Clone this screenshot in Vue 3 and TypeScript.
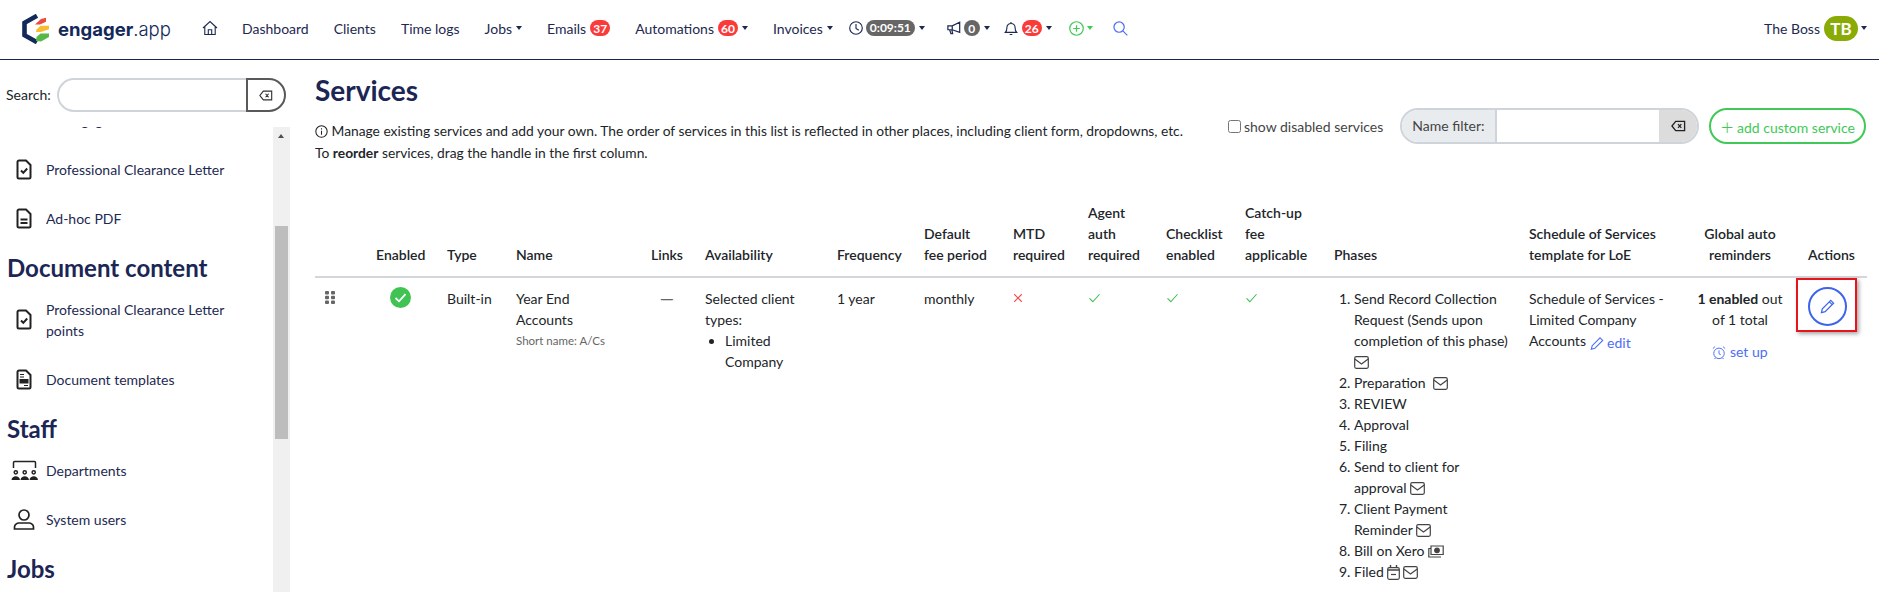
<script setup lang="ts">
const links: { label: string; badge?: string; caret?: boolean }[] = [
  { label: 'Dashboard' },
  { label: 'Clients' },
  { label: 'Time logs' },
  { label: 'Jobs', caret: true },
  { label: 'Emails', badge: '37' },
  { label: 'Automations', badge: '60', caret: true },
  { label: 'Invoices', caret: true },
]
const colWidths: number[] = [53, 71, 69, 135, 54, 132, 87, 89, 75, 78, 79, 89, 195, 159, 120, 67]
</script>

<template>
  <div class="page">
    <header class="nav">
      <div class="logo">
        <svg class="logo-mark" viewBox="0 0 28 30" width="28" height="30">
          <path d="M15 1.800 2.500 8.800V21.200L15 28.200" fill="none" stroke="#12295a" stroke-width="4.600" />
          <path d="M13 10.500 19 5 24 3.800V7.800L18 10.500Z" fill="#ec4a3f" />
          <path d="M14 18 14.500 15.500 18.500 11.800H27V15.200L19 18Z" fill="#f6bd32" />
          <path d="M14 27 14.500 23 18.500 19.500H27V23L19 27.500Z" fill="#58b847" />
        </svg>
        <span class="logo-text"><b>engager</b>.app</span>
      </div>
      <svg class="home" viewBox="0 0 16 16" width="16" height="16" fill="none" stroke="#1d2951" stroke-width="1.100">
        <path d="M1 8 8 1.500 15 8M2.800 6.500V14.500H13.200V6.500M6.300 14.500V9.800H9.700V14.500" />
      </svg>
      <nav class="links">
        <a v-for="l in links" :key="l.label" class="link">
          <span>{{ l.label }}</span>
          <span v-if="l.badge" class="badge">{{ l.badge }}</span>
          <i v-if="l.caret" class="caret"></i>
        </a>
      </nav>
      <div class="util clock">
        <svg viewBox="0 0 16 16" width="14" height="14" fill="none" stroke="#1d2951" stroke-width="1.300"><circle cx="8" cy="8" r="7.200" /><path d="M8 3.500V8.500L11.200 10.500" /></svg>
        <span class="pill">0:09:51</span>
        <i class="caret"></i>
      </div>
      <div class="util mega">
        <svg viewBox="0 0 16 16" width="14" height="16" fill="none" stroke="#1d2951" stroke-width="1.400"><path d="M1 5.500H6L14.500 1.500V13L6 10H1ZM6 5.500V10M3 10 4.500 14.500H6.500L5.500 10" /></svg>
        <span class="badge grey">0</span>
        <i class="caret"></i>
      </div>
      <div class="util bell">
        <svg viewBox="0 0 16 16" width="14" height="17" fill="none" stroke="#1d2951" stroke-width="1.300"><path d="M1.500 12.500C3 11 3.300 9.500 3.300 7C3.300 4 5.300 2.300 8 2.300S12.700 4 12.700 7C12.700 9.500 13 11 14.500 12.500ZM8 .5V2.300M6.500 14.800H9.500" /></svg>
        <span class="badge">26</span>
        <i class="caret"></i>
      </div>
      <div class="util plus">
        <svg viewBox="0 0 16 16" width="15" height="15" fill="none" stroke="#41c957" stroke-width="1.300"><circle cx="8" cy="8" r="7.200" /><path d="M8 4.500V11.500M4.500 8H11.500" /></svg>
        <i class="caret green"></i>
      </div>
      <svg class="search" viewBox="0 0 16 16" width="15" height="15" fill="none" stroke="#4d6ef5" stroke-width="1.300"><circle cx="6.500" cy="6.500" r="5.500" /><path d="M10.500 10.500 15.300 15.300" /></svg>
      <div class="user">
        <span>The Boss</span>
        <span class="avatar">TB</span>
        <i class="caret"></i>
      </div>
    </header>

    <div class="body">
      <aside class="side">
        <div class="side-search">
          <label>Search:</label>
          <div class="side-field">
            <input class="side-input" type="text" />
            <button class="side-clear">
              <svg viewBox="0 0 16 12" width="14" height="11" fill="none" stroke="#333" stroke-width="1.300"><path d="M5 1H14.500V11H5L1 6ZM7.500 4 11 8M11 4 7.500 8" /></svg>
            </button>
          </div>
        </div>
        <div class="side-scroll">
          <div class="side-list">
            <div class="side-inner">
              <div class="side-item"><span class="side-icon"></span><span>Disengagement Letter</span></div>
              <div class="side-item">
                <svg class="side-icon" viewBox="0 0 16 21" fill="none" stroke="#222" stroke-width="2"><path d="M1.500 3A1.500 1.500 0 0 1 3 1.500H10L14.500 6V18A1.500 1.500 0 0 1 13 19.500H3A1.500 1.500 0 0 1 1.500 18Z" /><path d="M5 11.500 7.300 13.800 11.200 9.500" /></svg>
                <span>Professional Clearance Letter</span>
              </div>
              <div class="side-item">
                <svg class="side-icon" viewBox="0 0 16 21" fill="none" stroke="#222" stroke-width="2"><path d="M1.500 3A1.500 1.500 0 0 1 3 1.500H10L14.500 6V18A1.500 1.500 0 0 1 13 19.500H3A1.500 1.500 0 0 1 1.500 18Z" /><path d="M4.500 11.500H11.500M4.500 15H11.500" /></svg>
                <span>Ad-hoc PDF</span>
              </div>
              <h2 class="side-head">Document content</h2>
              <div class="side-item">
                <svg class="side-icon" viewBox="0 0 16 21" fill="none" stroke="#222" stroke-width="2"><path d="M1.500 3A1.500 1.500 0 0 1 3 1.500H10L14.500 6V18A1.500 1.500 0 0 1 13 19.500H3A1.500 1.500 0 0 1 1.500 18Z" /><path d="M5 11.500 7.300 13.800 11.200 9.500" /></svg>
                <span class="side-wrap">Professional Clearance Letter points</span>
              </div>
              <div class="side-item">
                <svg class="side-icon" viewBox="0 0 16 21" fill="none" stroke="#222" stroke-width="2"><path d="M1.500 3A1.500 1.500 0 0 1 3 1.500H10L14.500 6V18A1.500 1.500 0 0 1 13 19.500H3A1.500 1.500 0 0 1 1.500 18Z" /><path d="M4 5.500H8M4 8H8" stroke-width="1" /><rect x="3.500" y="10" width="9" height="4.500" fill="#222" stroke="none" /><path d="M8 16.500H12" stroke-width="1" /></svg>
                <span>Document templates</span>
              </div>
              <h2 class="side-head">Staff</h2>
              <div class="side-item">
                <svg class="dept-icon" viewBox="0 0 27 20" width="27" height="20" fill="none" stroke="#222" stroke-width="1.500"><path d="M2.500 8V2.500A1 1 0 0 1 3.500 1.500H23.500A1 1 0 0 1 24.500 2.500V8" /><g fill="#222" stroke="none"><path d="M.5 20.500C.5 14.800 9 14.800 9 20.500ZM9.500 20.500C9.500 14.800 18 14.800 18 20.500ZM18.500 20.500C18.500 14.800 27 14.800 27 20.500Z" /></g><circle cx="4.800" cy="12.300" r="1.600" /><circle cx="13.700" cy="12.300" r="1.600" /><circle cx="22.700" cy="12.300" r="1.600" /></svg>
                <span>Departments</span>
              </div>
              <div class="side-item">
                <svg class="user-icon" viewBox="0 0 22 21" width="22" height="21" fill="none" stroke="#222" stroke-width="1.700"><circle cx="11" cy="6" r="5" /><path d="M1.500 20V18C1.500 15.500 4 14 6 14H16C18 14 20.500 15.500 20.500 18V20Z" /></svg>
                <span>System users</span>
              </div>
              <h2 class="side-head">Jobs</h2>
            </div>
          </div>
          <div class="scrollbar">
            <i class="arrow"></i>
            <div class="thumb"></div>
          </div>
        </div>
      </aside>

      <main class="main">
        <h1 class="title">Services</h1>
        <div class="toolbar">
          <p class="info">
            <svg class="info-icon" viewBox="0 0 16 16" width="13" height="13" fill="none" stroke="#222" stroke-width="1.300"><circle cx="8" cy="8" r="7" /><path d="M8 7V12M8 4V5.400" /></svg>
            Manage existing services and add your own. The order of services in this list is reflected in other places, including client form, dropdowns, etc.<br />
            To <b>reorder</b> services, drag the handle in the first column.
          </p>
          <label class="disabled-check"><input type="checkbox" class="check" /><span>show disabled services</span></label>
          <div class="filter">
            <span class="filter-label">Name filter:</span>
            <input class="filter-input" type="text" />
            <button class="filter-clear">
              <svg viewBox="0 0 16 12" width="15" height="12" fill="none" stroke="#222" stroke-width="1.400"><path d="M5 1H14.500V11H5L1 6ZM7.500 4 11 8M11 4 7.500 8" /></svg>
            </button>
          </div>
          <button class="add"><span class="add-plus">+</span> add custom service</button>
        </div>

        <table class="table">
          <colgroup><col v-for="(w, i) in colWidths" :key="i" :style="{ width: w + 'px' }" /></colgroup>
          <thead>
            <tr>
              <th></th><th>Enabled</th><th>Type</th><th>Name</th><th class="links-col">Links</th><th>Availability</th><th>Frequency</th>
              <th>Default<br />fee period</th><th>MTD<br />required</th><th>Agent<br />auth<br />required</th><th>Checklist<br />enabled</th><th>Catch-up<br />fee<br />applicable</th>
              <th>Phases</th><th>Schedule of Services<br />template for LoE</th><th class="center">Global auto<br />reminders</th><th>Actions</th>
            </tr>
          </thead>
          <tbody>
            <tr>
              <td>
                <svg class="drag" viewBox="0 0 10 13" width="10" height="13" fill="#666"><rect x="0" y="0" width="4" height="3.500" rx="1" /><rect x="6" y="0" width="4" height="3.500" rx="1" /><rect x="0" y="4.700" width="4" height="3.500" rx="1" /><rect x="6" y="4.700" width="4" height="3.500" rx="1" /><rect x="0" y="9.500" width="4" height="3.500" rx="1" /><rect x="6" y="9.500" width="4" height="3.500" rx="1" /></svg>
              </td>
              <td>
                <svg class="enabled" viewBox="0 0 21 21" width="21" height="21"><circle cx="10.500" cy="10.500" r="10.500" fill="#41c354" /><path d="M5.500 11 9 14.300 15.500 7.200" fill="none" stroke="#fff" stroke-width="1.800" /></svg>
              </td>
              <td>Built-in</td>
              <td><div class="name">Year End Accounts</div><small class="short">Short name: A/Cs</small></td>
              <td class="links-col dash">—</td>
              <td>
                Selected client types:
                <ul class="types"><li>Limited Company</li></ul>
              </td>
              <td>1 year</td>
              <td>monthly</td>
              <td><svg class="mark" viewBox="0 0 12 12" width="10" height="10" fill="none" stroke="#f0524f" stroke-width="1.400"><path d="M1.500 1.500 10.500 10.500M10.500 1.500 1.500 10.500" /></svg></td>
              <td><svg class="mark" viewBox="0 0 14 12" width="13" height="10" fill="none" stroke="#3fbf52" stroke-width="1.300"><path d="M1 6.500 5 10.500 13 1.500" /></svg></td>
              <td><svg class="mark" viewBox="0 0 14 12" width="13" height="10" fill="none" stroke="#3fbf52" stroke-width="1.300"><path d="M1 6.500 5 10.500 13 1.500" /></svg></td>
              <td><svg class="mark" viewBox="0 0 14 12" width="13" height="10" fill="none" stroke="#3fbf52" stroke-width="1.300"><path d="M1 6.500 5 10.500 13 1.500" /></svg></td>
              <td>
                <ol class="phases">
                  <li>Send Record Collection Request (Sends upon completion of this phase) <svg class="mail" viewBox="0 0 15 13" fill="none" stroke="#444" stroke-width="1.200"><rect x=".7" y=".7" width="13.600" height="11.600" rx="1.500" /><path d="M.8 3 7.500 8 14.200 3" /></svg></li>
                  <li>Preparation&nbsp; <svg class="mail" viewBox="0 0 15 13" fill="none" stroke="#444" stroke-width="1.200"><rect x=".7" y=".7" width="13.600" height="11.600" rx="1.500" /><path d="M.8 3 7.500 8 14.200 3" /></svg></li>
                  <li>REVIEW</li>
                  <li>Approval</li>
                  <li>Filing</li>
                  <li>Send to client for approval <svg class="mail" viewBox="0 0 15 13" fill="none" stroke="#444" stroke-width="1.200"><rect x=".7" y=".7" width="13.600" height="11.600" rx="1.500" /><path d="M.8 3 7.500 8 14.200 3" /></svg></li>
                  <li>Client Payment Reminder <svg class="mail" viewBox="0 0 15 13" fill="none" stroke="#444" stroke-width="1.200"><rect x=".7" y=".7" width="13.600" height="11.600" rx="1.500" /><path d="M.8 3 7.500 8 14.200 3" /></svg></li>
                  <li>Bill on Xero <svg class="cash" viewBox="0 0 16 13" fill="none" stroke="#444" stroke-width="1.200"><path d="M3 3.500H.8V12H13M3 1H15.200V9.500H3Z" /><circle cx="9" cy="5.300" r="2.300" fill="#444" /></svg></li>
                  <li>Filed <svg class="cal" viewBox="0 0 13 15" fill="none" stroke="#444" stroke-width="1.200"><rect x=".7" y="2.700" width="11.600" height="11.600" rx="1.500" /><path d="M3.500 0V3M9.500 0V3M.7 5H12.300" stroke-width="1.400" /><path d="M4 9.500H9" /></svg><svg class="mail" viewBox="0 0 15 13" fill="none" stroke="#444" stroke-width="1.200"><rect x=".7" y=".7" width="13.600" height="11.600" rx="1.500" /><path d="M.8 3 7.500 8 14.200 3" /></svg></li>
                </ol>
              </td>
              <td>
                Schedule of Services - Limited Company Accounts
                <a class="blue edit"><svg viewBox="0 0 16 16" width="14" height="15" fill="none" stroke="#4d6ef5" stroke-width="1.300"><path d="M11.500 1.500 14.500 4.500 5.500 13.500 1.500 14.500 2.500 10.500Z" /></svg> edit</a>
              </td>
              <td class="center global">
                <b>1 enabled</b> out of 1 total
                <a class="blue setup"><svg viewBox="0 0 16 16" width="14" height="15" fill="none" stroke="#4d6ef5" stroke-width="1.100"><circle cx="8" cy="9" r="6" /><path d="M8 5.500V9.500L10 10.500M1 3.500 3.500 1.200M15 3.500 12.500 1.200M4 14 3 15.500M12 14 13 15.500" /></svg> set up</a>
              </td>
              <td class="action-cell">
                <button class="edit-btn">
                  <svg viewBox="0 0 16 16" width="15" height="15" fill="none" stroke="#3e63ee" stroke-width="1.300"><path d="M11.500 1.500 14.500 4.500 5.500 13.500 1.500 14.500 2.500 10.500Z" /><path d="M10 3 13 6" /></svg>
                </button>
                <span class="highlight"></span>
              </td>
            </tr>
          </tbody>
        </table>
      </main>
    </div>
  </div>
</template>

<style>
html, body { margin: 0; overflow: hidden; background: #fff; }
</style>

<style scoped>
.page { width: 1879px; height: 592px; overflow: hidden; font: 14px/21px Lato, "Open Sans", sans-serif; color: #212529; display: flex; flex-direction: column; }
.nav { height: 56px; flex: none; border-bottom: 1px solid #1b2654; display: flex; align-items: center; padding: 0 12px 3px 22px; color: #1d2951; box-sizing: content-box; }
.logo { display: flex; align-items: center; gap: 8px; width: 149px; margin-top: 2px; }
.logo-mark { flex: none; }
.logo-text { font: 300 18.500px/1 Inter, sans-serif; color: #12295a; white-space: nowrap; }
.logo-text b { font-weight: 700; }
.home { margin-left: 31px; flex: none; }
.links { display: flex; gap: 25px; margin-left: 24px; }
.link { display: flex; align-items: center; white-space: nowrap; }
.badge { display: inline-flex; justify-content: center; align-items: center; min-width: 20px; height: 16px; box-sizing: border-box; padding: 0 3px; margin-left: 4px; background: #fb3a3a; color: #fff; border-radius: 8px; font-size: 12px; font-weight: 700; }
.badge.grey { background: #666; min-width: 16px; width: 16px; margin-left: 3px; }
.caret { display: inline-block; width: 0; height: 0; margin-left: 4px; border: 3.500px solid transparent; border-top: 4.500px solid #1d2951; border-bottom: 0; }
.caret.green { border-top-color: #41c957; }
.util { display: flex; align-items: center; flex: none; }
.clock { margin-left: 16px; }
.pill { background: #666; color: #fff; height: 16px; line-height: 16px; border-radius: 8px; padding: 0 4px; margin-left: 3px; font-size: 12px; font-weight: 700; }
.mega { margin-left: 22px; }
.bell { margin-left: 14px; }
.plus { margin-left: 17px; }
.plus .caret { margin-left: 3px; }
.search { margin-left: 20px; flex: none; }
.user { margin-left: auto; display: flex; align-items: center; }
.avatar { width: 34px; height: 25px; margin-left: 4px; margin-right: -1px; border-radius: 13px; background: #8aab06; color: #fff; font-size: 17px; font-weight: 700; display: flex; align-items: center; justify-content: center; }

.body { flex: 1; display: flex; min-height: 0; }
.side { width: 290px; flex: none; display: flex; flex-direction: column; }
.side-search { height: 67px; flex: none; box-sizing: border-box; padding: 18px 4px 0 6px; display: flex; align-items: flex-start; }
.side-search label { width: 51px; line-height: 34px; flex: none; }
.side-field { display: flex; width: 229px; height: 34px; }
.side-input { flex: 1; min-width: 0; box-sizing: border-box; border: 2px solid #ced4da; border-right: 0; border-radius: 17px 0 0 17px; outline: 0; background: #fff; padding: 0; }
.side-clear { width: 40px; border: 2px solid #595959; border-radius: 0 17px 17px 0; background: #fff; padding: 0; display: flex; align-items: center; justify-content: center; }
.side-scroll { flex: 1; min-height: 0; display: flex; }
.side-list { flex: 1; overflow: hidden; color: #1d2951; }
.side-inner { margin-top: -31.500px; padding-left: 7px; }
.side-item { display: flex; align-items: center; padding: 14px 0; min-height: 21px; }
.side-icon { width: 16px; height: 21px; margin-left: 9px; margin-right: 14px; flex: none; }
.user-icon { flex: none; margin-left: 6px; margin-right: 11px; }
.dept-icon { flex: none; margin-left: 4px; margin-right: 8px; }
.side-wrap { width: 180px; }
.side-head { margin: 0; padding: 10px 0 3px; font-size: 24px; line-height: 29px; font-weight: 700; color: #1b2654; }
.scrollbar { width: 17px; background: #f0f0f0; box-sizing: border-box; padding: 0 2px; position: relative; }
.arrow { position: absolute; top: 7px; left: 5px; border: 3.500px solid transparent; border-bottom: 4px solid #505050; border-top: 0; }
.thumb { margin-top: 99px; height: 213px; background: #bdbdbd; }

.main { flex: 1; min-width: 0; padding: 0 12px 0 25px; }
.title { margin: 13px 0 0; font-size: 28px; line-height: 34px; font-weight: 700; color: #1b2654; }
.toolbar { display: flex; align-items: flex-start; margin-top: 1px; height: 94px; }
.info { margin: 12px 0 0; width: 903px; flex: none; font-size: 13.800px; line-height: 22px; color: #212529; }
.info b { font-weight: 700; }
.info-icon { vertical-align: -2px; }
.disabled-check { display: flex; align-items: center; height: 36px; margin-left: 10px; color: #444; font-size: 14px; white-space: nowrap; }
.check { width: 13px; height: 13px; margin: 0 3px 0 0; }
.filter { display: flex; width: 299px; height: 36px; margin-left: 17px; box-sizing: border-box; border: 2px solid #ced4da; border-radius: 18px; overflow: hidden; }
.filter-label { width: 95px; flex: none; background: #e9ecef; border-right: 2px solid #ced4da; box-sizing: border-box; padding-left: 10px; line-height: 32px; color: #444; }
.filter-input { flex: 1; min-width: 0; border: 0; outline: 0; padding: 0; }
.filter-clear { width: 38px; flex: none; background: #dcdcdc; border: 0; padding: 0; display: flex; align-items: center; justify-content: center; }
.add { width: 157px; height: 36px; margin-left: 10px; border: 2px solid #41c957; border-radius: 18px; background: #fff; color: #41c957; font: 14px Lato, sans-serif; padding: 0; white-space: nowrap; }
.add-plus { font-size: 22px; font-weight: 300; vertical-align: -2px; }

.table { table-layout: fixed; border-collapse: collapse; width: 1552px; }
.table th { padding: 0 8px 11px; text-align: left; vertical-align: bottom; font-weight: 600; border-bottom: 2px solid #d3d6da; color: #212529; }
.table td { padding: 10px 8px 0; vertical-align: top; }
.table .center { text-align: center; }
.table .links-col { padding-right: 14px; text-align: center; }
.table .global { padding: 10px 16px 0; }
.table .dash { color: #666; font-size: 18px; }
.drag { display: block; margin: 3px 0 0 2px; }
.enabled { display: block; margin: -1px 0 0 14px; }
.name { width: 100px; }
.short { display: block; font-size: 11.500px; color: #666; }
.types { margin: 0; padding-left: 20px; }
.mark { display: block; margin-top: 5px; }
.phases { margin: 0; padding: 0 4px 0 20px; }
.mail { width: 15px; height: 13px; vertical-align: -2px; }
.cash { width: 16px; height: 13px; vertical-align: -2px; }
.cal { width: 13px; height: 15px; vertical-align: -3px; margin-right: 3px; }
.blue { color: #4d6ef5; }
.edit svg { vertical-align: -3px; }
.edit { position: relative; top: 2px; }
.setup { display: block; margin-top: 11px; }
.setup svg { vertical-align: -3px; }
.action-cell { position: relative; }
.edit-btn { display: flex; width: 39px; height: 39px; border: 2px solid #3e63ee; background: #fff; border-radius: 50%; align-items: center; justify-content: center; padding: 0; margin: -1px 0 0; }
.highlight { position: absolute; left: -4px; top: 0; width: 61px; height: 54px; box-sizing: border-box; border: 2px solid #e8141c; box-shadow: 2px 2px 4px rgba(0, 0, 0, .35); }
</style>
